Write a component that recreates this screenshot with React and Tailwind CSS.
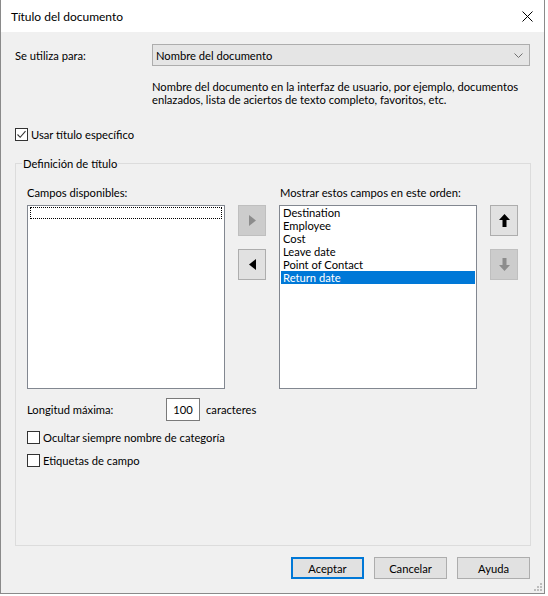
import { useState } from "react";

const fields = ["Destination", "Employee", "Cost", "Leave date", "Point of Contact", "Return date"];

const CheckBox = ({ checked, onChange, label }) => (
  <label className="flex items-center h-[13px] cursor-default select-none" onClick={onChange}>
    <span className="w-[13px] h-[13px] border border-[#333333] bg-white flex items-center justify-center">
      {checked && (
        <svg width="11" height="11" viewBox="0 0 11 11">
          <path d="M1.5 5.5 L4.2 8.3 L9.5 2.2" fill="none" stroke="#333333" strokeWidth="1.1" />
        </svg>
      )}
    </span>
    <span className="ml-[3px]">{label}</span>
  </label>
);

const SideButton = ({ disabled, children }) => (
  <button
    disabled={disabled}
    className={`w-[28px] h-[31px] border flex items-center justify-center ${
      disabled ? "bg-[#cccccc] border-[#bfbfbf]" : "bg-[#e1e1e1] border-[#adadad]"
    }`}
  >
    {children}
  </button>
);

export default function App() {
  const [useTitle, setUseTitle] = useState(true);
  const [hideCat, setHideCat] = useState(false);
  const [labels, setLabels] = useState(false);
  const [selected, setSelected] = useState(5);

  return (
    <div className="w-[548px] h-[596px] bg-white font-['Lato',sans-serif] text-[11.2px] text-black leading-[13px]">
      <div className="w-[545px] h-[594px] border border-t-0 border-[#8a8a8a] flex flex-col">
        {/* title bar */}
        <div className="h-[32px] bg-white flex items-center justify-between pl-[10px] pr-[11px]">
          <span className="text-[12px]">Título del documento</span>
          <svg width="11" height="11" viewBox="0 0 11 11">
            <path d="M0.5 0.5 L10.5 10.5 M10.5 0.5 L0.5 10.5" stroke="#000" strokeWidth="1" />
          </svg>
        </div>

        <div className="flex-1 bg-[#f0f0f0] relative px-[14px] flex flex-col">
          <div className="mt-[12px] h-[22px] flex items-center">
            <span className="w-[137px]">Se utiliza para:</span>
            <div className="w-[378px] h-[22px] border border-[#adadad] bg-[#e5e5e5] flex items-center justify-between pl-[3px] pr-[6px]">
              <span>Nombre del documento</span>
              <svg width="9" height="5" viewBox="0 0 9 5">
                <path d="M0.5 0.5 L4.5 4.5 L8.5 0.5" fill="none" stroke="#707070" strokeWidth="1" />
              </svg>
            </div>
          </div>

          <p className="ml-[137px] mt-[14px] leading-[13px]">
            Nombre del documento en la interfaz de usuario, por ejemplo, documentos
            <br />
            enlazados, lista de aciertos de texto completo, favoritos, etc.
          </p>

          <div className="mt-[22px] flex items-center">
            <CheckBox checked={useTitle} onChange={() => setUseTitle(!useTitle)} label="Usar título específico" />
          </div>

          {/* group box */}
          <div className="mt-[22px] w-[516px] h-[383px] border border-[#dcdcdc] relative pl-[11px] pt-[22px]">
            <span className="absolute -top-[7px] left-[6px] px-[1px] bg-[#f0f0f0]">Definición de título</span>

            <div className="flex">
              <div className="flex flex-col">
                <span className="h-[13px]">Campos disponibles:</span>
                <div className="mt-[6px] w-[198px] h-[184px] border border-[#828790] bg-white p-[1px]">
                  <div className="h-[12px] border border-dotted border-black mx-[1px]" />
                </div>
              </div>

              <div className="ml-[13px] mt-[19px] flex flex-col gap-[13px]">
                <SideButton disabled>
                  <svg width="7" height="11" viewBox="0 0 7 11">
                    <path d="M0 0 L7 5.5 L0 11 Z" fill="#8c8c8c" />
                  </svg>
                </SideButton>
                <SideButton>
                  <svg width="7" height="11" viewBox="0 0 7 11">
                    <path d="M7 0 L0 5.5 L7 11 Z" fill="#000" />
                  </svg>
                </SideButton>
              </div>

              <div className="ml-[13px] flex flex-col">
                <span className="h-[13px] pl-[1px]">Mostrar estos campos en este orden:</span>
                <div className="mt-[6px] w-[198px] h-[184px] border border-[#828790] bg-white px-[1px] flex flex-col">
                  {fields.map((f, i) => (
                    <div
                      key={f}
                      onClick={() => setSelected(i)}
                      className={`h-[13px] leading-[13px] pl-[2px] ${
                        selected === i ? "bg-[#0078d7] text-white" : ""
                      }`}
                    >
                      {f}
                    </div>
                  ))}
                </div>
              </div>

              <div className="ml-[13px] mt-[19px] flex flex-col gap-[13px]">
                <SideButton>
                  <svg width="11" height="13" viewBox="0 0 11 13">
                    <path d="M5.5 0 L11 6 L7.5 6 L7.5 13 L3.5 13 L3.5 6 L0 6 Z" fill="#000" />
                  </svg>
                </SideButton>
                <SideButton disabled>
                  <svg width="11" height="13" viewBox="0 0 11 13">
                    <path d="M5.5 13 L11 7 L7.5 7 L7.5 0 L3.5 0 L3.5 7 L0 7 Z" fill="#8c8c8c" />
                  </svg>
                </SideButton>
              </div>
            </div>

            <div className="mt-[9px] flex items-center">
              <span className="w-[139px]">Longitud máxima:</span>
              <div className="w-[34px] h-[23px] border border-[#7a7a7a] bg-white flex items-center justify-center">
                100
              </div>
              <span className="ml-[6px]">caracteres</span>
            </div>

            <div className="mt-[10px] flex flex-col gap-[10px]">
              <CheckBox checked={hideCat} onChange={() => setHideCat(!hideCat)} label="Ocultar siempre nombre de categoría" />
              <CheckBox checked={labels} onChange={() => setLabels(!labels)} label="Etiquetas de campo" />
            </div>
          </div>

          <div className="mt-[11px] flex justify-end gap-[10px]">
            <button className="w-[73px] h-[22px] border-2 border-[#0078d7] bg-[#e1e1e1]">Aceptar</button>
            <button className="w-[73px] h-[22px] border border-[#adadad] bg-[#e1e1e1]">Cancelar</button>
            <button className="w-[73px] h-[22px] border border-[#adadad] bg-[#e1e1e1]">Ayuda</button>
          </div>

          <svg className="absolute right-[2px] bottom-[2px]" width="8" height="8" viewBox="0 0 8 8">
            <rect x="6" y="0" width="2" height="2" fill="#bdbdbd" />
            <rect x="3" y="3" width="2" height="2" fill="#bdbdbd" />
            <rect x="6" y="3" width="2" height="2" fill="#bdbdbd" />
            <rect x="0" y="6" width="2" height="2" fill="#bdbdbd" />
            <rect x="3" y="6" width="2" height="2" fill="#bdbdbd" />
            <rect x="6" y="6" width="2" height="2" fill="#bdbdbd" />
          </svg>
        </div>
      </div>
    </div>
  );
}
